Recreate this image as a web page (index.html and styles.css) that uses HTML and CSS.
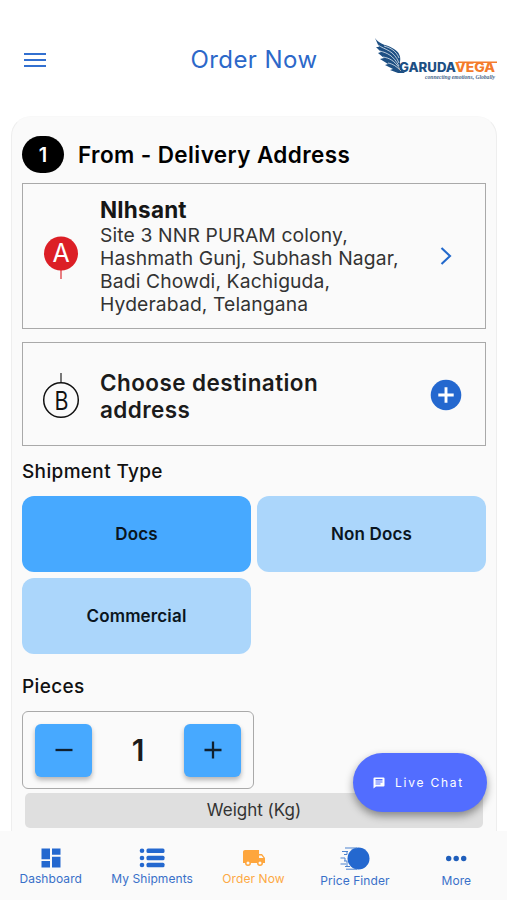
FILE: index.html
```html
<!DOCTYPE html>
<html lang="en">
<head>
<meta charset="utf-8">
<title>Order Now</title>
<link rel="stylesheet" href="styles.css">
</head>
<body>
<div class="app">
  <header class="header">
    <button class="menu" aria-label="Menu"><span></span><span></span><span></span></button>
    <h1 class="title">Order Now</h1>
    <svg class="logo" width="125" height="46" viewBox="0 0 125 46">
      <path fill="#1d4f83" d="M1 2C5 9 15 9 20 13C25 16 27 20 26 26C26 31 27 34 31 37H24L16 34L19 33L11 29L14 28L6 23L10 22L4 17L7 16L2 11L5 11Z"/>
      <path fill="none" stroke="#fff" stroke-width=".7" d="M4 9C11 14 20 14 25 27M6 15C13 17 19 19 25 30M9 21C15 22 20 24 26 33M14 27C19 28 22 30 27 35M10 10C17 12 22 15 25 22"/>
      <text class="logo-name" x="25" y="36" textLength="57" lengthAdjust="spacingAndGlyphs" fill="#1d4f83">GARUDA</text>
      <text class="logo-name" x="81" y="36" textLength="40" lengthAdjust="spacingAndGlyphs" fill="#f47b2b">VEGA</text>
      <path d="M84 26.200H123" stroke="#f47b2b" stroke-width="1.400"/>
      <text class="logo-tag" x="51" y="42.500" textLength="70" lengthAdjust="spacingAndGlyphs" fill="#47678b">connecting emotions, Globally</text>
    </svg>
  </header>

  <main class="content">
    <section class="card">
      <div class="step">
        <span class="step-number">1</span>
        <h2 class="step-title">From - Delivery Address</h2>
      </div>

      <div class="address origin">
        <svg class="pin" width="38" height="48" viewBox="0 0 38 48">
          <path d="M19 34V45" stroke="#e2555a" stroke-width="1.500"/>
          <circle cx="19" cy="19.500" r="17" fill="#dc1f26"/>
          <text class="pin-letter" x="19" y="28" fill="#fff">A</text>
        </svg>
        <div class="address-body">
          <h3 class="address-name">NIhsant</h3>
          <p class="address-text">Site 3 NNR PURAM colony,<br>Hashmath Gunj, Subhash Nagar,<br>Badi Chowdi, Kachiguda,<br>Hyderabad, Telangana</p>
        </div>
        <svg class="action" width="32" height="32" viewBox="0 0 32 32"><path d="M11.500 8L20 16L11.500 24" fill="none" stroke="#2269cc" stroke-width="2.100"/></svg>
      </div>

      <div class="address destination">
        <svg class="pin" width="38" height="48" viewBox="0 0 38 48">
          <path d="M19 1V11" stroke="#222" stroke-width="1.200"/>
          <circle cx="19" cy="28" r="17.300" fill="none" stroke="#111" stroke-width="1.500"/>
          <text class="pin-letter" x="12.500" y="38" textLength="14" lengthAdjust="spacingAndGlyphs" fill="#111">B</text>
        </svg>
        <h3 class="destination-name">Choose destination<br>address</h3>
        <svg class="action" width="32" height="32" viewBox="0 0 32 32"><circle cx="16" cy="16" r="15.300" fill="#2468cf"/><path d="M8.300 16H23.700M16 8.300V23.700" stroke="#fff" stroke-width="2.900"/></svg>
      </div>

      <h3 class="label">Shipment Type</h3>
      <div class="types">
        <button class="type selected">Docs</button>
        <button class="type">Non Docs</button>
        <button class="type">Commercial</button>
      </div>

      <h3 class="label pieces-label">Pieces</h3>
      <div class="stepper">
        <button class="step-btn" aria-label="Decrease"><svg width="20" height="20" viewBox="0 0 20 20"><path d="M1.500 10H18.500" stroke="#10202e" stroke-width="2.300"/></svg></button>
        <span class="count">1</span>
        <button class="step-btn" aria-label="Increase"><svg width="20" height="20" viewBox="0 0 20 20"><path d="M1.500 10H18.500M10 1.500V18.500" stroke="#10202e" stroke-width="2.300"/></svg></button>
      </div>
      <div class="weight">Weight (Kg)</div>
    </section>
  </main>

  <nav class="nav">
    <a class="tab"><svg width="24" height="24" viewBox="0 0 24 24" fill="#2468cf"><path d="M2.500 2.500H11V13.200H2.500ZM13 2.500H21.500V8.800H13ZM2.500 15H11V21.500H2.500ZM13 10.800H21.500V21.500H13Z"/></svg><span>Dashboard</span></a>
    <a class="tab"><svg width="26" height="24" viewBox="0 0 26 24" fill="#2468cf"><circle cx="3" cy="4.700" r="2.300"/><circle cx="3" cy="12" r="2.300"/><circle cx="3" cy="19" r="2.300"/><rect x="7.500" y="2.400" width="18" height="4.600" rx="1.500"/><rect x="7.500" y="9.700" width="18" height="4.600" rx="1.500"/><rect x="7.500" y="16.700" width="18" height="4.600" rx="1.500"/></svg><span>My Shipments</span></a>
    <a class="tab active"><svg width="24" height="24" viewBox="0 0 24 24" fill="#fea63d"><path d="M20 8h-3V4H3c-1.100 0-2 .9-2 2v11h2a3 3 0 006 0h6a3 3 0 006 0h2v-5zM6 18.500a1.500 1.500 0 110-3 1.500 1.500 0 010 3zm13.500-9l1.960 2.500H17V9.500zM18 18.500a1.500 1.500 0 110-3 1.500 1.500 0 010 3z"/></svg><span>Order Now</span></a>
    <a class="tab price"><svg width="32" height="24" viewBox="0 0 32 24"><circle cx="19.500" cy="12.500" r="11" fill="#2468cf"/><path d="M6 2H18M3 5.500H9M5 8.500H8M1.500 12H6M5 15H8M1.500 18H7M6 20.500H11M7 23.200H18M8 5.500V8.500M6 12V15M8 15V20" fill="none" stroke="#4d83cf" stroke-width="1"/></svg><span>Price Finder</span></a>
    <a class="tab more"><svg width="24" height="24" viewBox="0 0 24 24" fill="#1f5ebb"><circle cx="4.700" cy="12.500" r="2.700"/><circle cx="12.200" cy="12.500" r="2.700"/><circle cx="19.700" cy="12.500" r="2.700"/></svg><span>More</span></a>
  </nav>

  <button class="chat"><svg width="12" height="12" viewBox="0 0 24 24" fill="#fff"><path fill-rule="evenodd" d="M3 1H21Q23 1 23 3V17Q23 19 21 19H6L1 23V3Q1 1 3 1ZM5 4V7H19V4ZM5 9V11H19V9ZM5 13V15H15V13Z"/></svg><span>Live Chat</span></button>
</div>
</body>
</html>
```

FILE: styles.css
```css
* { box-sizing: border-box; }
body { margin: 0; background: #fff; font-family: Inter, "Liberation Sans", sans-serif; color: #111; }
h1, h2, h3, p { margin: 0; font-weight: 500; }
button { border: 0; padding: 0; font: inherit; color: inherit; }

.app { position: relative; display: flex; flex-direction: column; width: 507px; height: 900px; overflow: hidden; }

.header { flex: none; display: grid; grid-template-columns: 1fr auto 1fr; align-items: center; height: 116px; padding: 4px 8px 0 24px; }
.menu { display: flex; flex-direction: column; gap: 4px; width: 22px; background: none; }
.menu span { height: 2px; background: #3270d0; }
.title { padding-right: 15px; font-size: 24px; font-weight: 400; line-height: 30px; letter-spacing: .45px; color: #2c68c9; white-space: nowrap; }
.logo { justify-self: end; margin-top: -3px; }
.logo-name { font-size: 12.500px; font-weight: 800; }
.logo-tag { font-family: "Liberation Serif", serif; font-size: 5.500px; font-style: italic; font-weight: bold; }

.content { flex: 1; min-height: 0; overflow: hidden; padding: 0 10px 0 11px; }
.card { height: 760px; padding: 19px 10px 0; border: 1px solid #eee; border-top-color: #f8f8f8; border-radius: 20px; background: #fafafa; }

.step { display: flex; align-items: center; gap: 14px; height: 37px; }
.step-number { display: flex; align-items: center; justify-content: center; width: 42px; height: 37px; border-radius: 19px; background: #000; color: #fff; font-size: 20px; font-weight: 600; }
.step-title { font-size: 22.500px; font-weight: 600; line-height: 28px; letter-spacing: .4px; color: #000; white-space: nowrap; }

.address { display: flex; align-items: center; border: 1px solid #a9a9a9; padding: 0 23px 0 19px; }
.pin { flex: none; margin-right: 20px; }
.pin-letter { font-size: 25px; }
.origin .pin-letter { text-anchor: middle; }
.action { flex: none; margin-left: auto; }
.origin { height: 146px; margin-top: 10px; }
.origin .pin { margin-top: 3px; }
.address-name { padding-top: 1px; font-size: 22.500px; font-weight: 700; line-height: 26px; letter-spacing: .2px; color: #161616; }
.address-text { padding-top: 1px; font-size: 19.300px; font-weight: 400; line-height: 23.200px; letter-spacing: .13px; color: #333; white-space: nowrap; }
.destination { height: 104px; margin-top: 13px; padding-top: 1px; }
.destination .pin { margin-top: 2px; }
.destination-name { padding-top: 2px; font-size: 22.500px; font-weight: 600; line-height: 27px; letter-spacing: .42px; color: #1b1b1b; white-space: nowrap; }

.label { margin-top: 13px; font-size: 19px; line-height: 26px; letter-spacing: .35px; color: #111; }
.types { display: grid; grid-template-columns: 1fr 1fr; gap: 6px; margin-top: 11px; }
.type { height: 76px; border-radius: 12px; background: #abd6fb; color: #0a1520; font-size: 17px; font-weight: 600; letter-spacing: .15px; }
.selected { background: #47a9ff; }
.pieces-label { margin-top: 20px; }

.stepper { display: flex; align-items: center; justify-content: space-between; width: 232px; height: 78px; margin-top: 11px; padding: 0 12px; border: 1px solid #a9a9a9; border-radius: 6px; }
.step-btn { display: flex; align-items: center; justify-content: center; width: 57px; height: 53px; border-radius: 6px; background: #47a9ff; box-shadow: 0 3px 5px rgba(0, 0, 0, .28); }
.count { font-size: 30px; font-weight: 600; color: #1b1b1b; }
.weight { height: 35px; margin: 4px 3px 0; border-radius: 5px; background: #dfdfdf; color: #333; font-size: 17px; line-height: 35px; text-align: center; }

.nav { flex: none; display: flex; height: 69px; background: #fafafa; }
.tab { flex: 1; display: flex; flex-direction: column; align-items: center; padding-top: 15px; color: #3970c9; font-size: 12px; line-height: 16px; letter-spacing: .08px; white-space: nowrap; }
.tab span { margin-top: 1px; }
.active { color: #fda944; }
.price span, .more span { margin-top: 3px; }

.chat { position: absolute; left: 353px; top: 753px; display: flex; align-items: center; justify-content: center; gap: 10px; width: 134px; height: 59px; padding-right: 3px; border-radius: 30px; background: #526dff; color: #fff; box-shadow: 0 4px 8px rgba(0, 0, 0, .4); font-size: 12px; letter-spacing: 1.750px; }
```
